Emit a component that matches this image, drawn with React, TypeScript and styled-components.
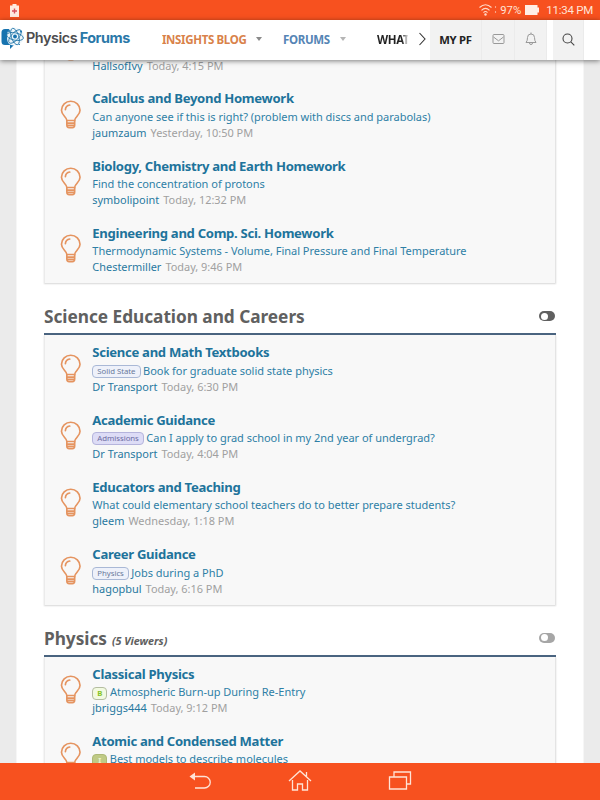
import React from "react";
import styled, { createGlobalStyle } from "styled-components";

const Global = createGlobalStyle`
  * { box-sizing: border-box; }
  body { margin: 0; background: #ebebeb; font-family: "Noto Sans", sans-serif; }
`;

const Screen = styled.div`
  width: 600px;
  height: 800px;
  display: flex;
  flex-direction: column;
  overflow: hidden;
  background: #ebebeb;
`;

const StatusBar = styled.div`
  height: 19.5px;
  flex: none;
  display: flex;
  align-items: center;
  justify-content: space-between;
  padding: 0 7px 0 10px;
  background: #f7511f;
  color: #ffe3d6;
  font: 11.5px Roboto, sans-serif;
  svg { display: block; }
`;

const StatusGroup = styled.div`
  display: flex;
  align-items: center;
`;

const Percent = styled.span`
  margin: 1px 4px 0 3px;
  font-size: 11.3px;
`;

const Clock = styled.span`
  margin: 1px 0 0 7px;
  font-size: 11.5px;
  letter-spacing: -0.25px;
`;

const Header = styled.header`
  position: relative;
  z-index: 2;
  height: 40.5px;
  flex: none;
  display: flex;
  background: #fff;
  box-shadow: 0 1px 5px rgba(0, 0, 0, 0.5);
`;

const Brand = styled.div`
  width: 162px;
  flex: none;
  display: flex;
  align-items: center;
  padding: 0 0 4px 1px;
  font: 600 14.4px Inter, sans-serif;
  letter-spacing: -0.45px;
  color: #4d4d4f;
  white-space: nowrap;
  svg { margin-right: 2px; flex: none; }
  b { color: #2a78a8; font-weight: 700; margin-left: 2.5px; }
`;

const NavItem = styled.div<{ $color: string; $width: number; $caret?: string }>`
  width: ${(p) => p.$width}px;
  flex: none;
  display: flex;
  align-items: center;
  padding-bottom: 1px;
  font-size: 11.5px;
  letter-spacing: -0.35px;
  font-weight: 700;
  color: ${(p) => p.$color};
  white-space: nowrap;
  overflow: hidden;
  &::after {
    content: "";
    display: ${(p) => (p.$caret ? "block" : "none")};
    margin-left: 10px;
    border: 3.5px solid transparent;
    border-top: 4px solid ${(p) => p.$caret};
    border-bottom: 0;
  }
`;

const Fade = styled.span`
  background: linear-gradient(90deg, #222 78%, #ddd 96%);
  background-clip: text;
  color: transparent;
`;

const NavCell = styled.div<{ $width: number; $gap?: number }>`
  width: ${(p) => p.$width}px;
  margin-left: ${(p) => p.$gap ?? 0}px;
  flex: none;
  display: flex;
  align-items: center;
  justify-content: center;
  padding-bottom: 1px;
  background: #f2f2f2;
  border-right: 1px solid #ebebeb;
  font-size: 11.3px;
  letter-spacing: -0.25px;
  font-weight: 700;
  color: #222;
`;

const Chevron = styled.div`
  width: 15px;
  flex: none;
  display: flex;
  align-items: center;
  svg { margin: 0 0 2px 3px; flex: none; }
`;

const Viewport = styled.main`
  flex: 1;
  min-height: 0;
  overflow: hidden;
  display: flex;
  justify-content: center;
`;

const Page = styled.div`
  width: 568px;
  flex: none;
  align-self: flex-start;
  padding: 0 27px;
  margin-top: -46px;
  background: #fff;
  border-left: 1px solid #f6f6f6;
  border-right: 1px solid #f6f6f6;
`;

const SectionHead = styled.div`
  height: 52.2px;
  display: flex;
  align-items: flex-end;
  justify-content: space-between;
  padding: 0 1px 4px 0;
  border-bottom: 2.5px solid #4a6480;
`;

const Heading = styled.h2`
  margin: 0;
  height: 24px;
  font-size: 17.25px;
  line-height: 24px;
  letter-spacing: -0.03px;
  font-weight: 700;
  color: #606060;
  white-space: nowrap;
  small { font-size: 10.8px; line-height: 1; font-style: italic; margin-left: 0.5px; }
`;

const Toggle = styled.span<{ $color: string }>`
  width: 16px;
  height: 10px;
  margin-bottom: 8px;
  display: flex;
  align-items: center;
  padding-left: 1.5px;
  border-radius: 5px;
  background: ${(p) => p.$color};
  &::after {
    content: "";
    width: 7px;
    height: 7px;
    border-radius: 50%;
    background: #fff;
  }
`;

const List = styled.div`
  background: #f8f8f8;
  border-left: 1px solid #ebebeb;
  border-right: 1px solid #e4e4e4;
  box-shadow: 0 1px 1.5px rgba(0, 0, 0, 0.16);
`;

const Row = styled.article`
  height: 67.3px;
  display: grid;
  grid-template-columns: 47.3px 1fr;
  padding-top: 7px;
  white-space: nowrap;
`;

const BulbSlot = styled.div`
  padding: 11.3px 0 0 15px;
  svg { display: block; }
`;

const Title = styled.h3`
  margin: 0;
  height: 20px;
  font-size: 13.1px;
  letter-spacing: -0.3px;
  line-height: 20px;
  font-weight: 700;
  color: #20739b;
`;

const Topic = styled.div`
  height: 16.5px;
  display: flex;
  align-items: center;
  font-size: 11px;
  letter-spacing: -0.02px;
  line-height: 16px;
  color: #2e7fa6;
`;

const Meta = styled.div`
  font-size: 10.95px;
  line-height: 16px;
  color: #a0a0a0;
  span { color: #2878a0; margin-right: 4px; }
`;

const tones = {
  blue: ["#eef1fa", "#a9b8d6", "#69799a"],
  violet: ["#dddcf6", "#b5b4dc", "#6b6ba2"],
  green: ["#f2fae0", "#b4bda0", "#86c428"],
  olive: ["#bfca85", "#adb976", "#eef3cd"],
};
type Tone = keyof typeof tones;

const Tag = styled.span<{ $tone: Tone }>`
  height: 13px;
  min-width: 15px;
  margin: 2px 2.5px 0 0;
  padding: 0 4px;
  border-radius: 4px;
  font-size: 7.8px;
  letter-spacing: -0.03px;
  line-height: 11.5px;
  text-align: center;
  font-weight: ${(p) => (p.$tone === "green" || p.$tone === "olive" ? 700 : 400)};
  background: ${(p) => tones[p.$tone][0]};
  border: 1px solid ${(p) => tones[p.$tone][1]};
  color: ${(p) => tones[p.$tone][2]};
`;

const SystemNav = styled.nav`
  position: relative;
  z-index: 2;
  height: 37.5px;
  flex: none;
  display: flex;
  align-items: center;
  justify-content: center;
  gap: 76px;
  background: #f7511f;
`;

const Bulb = () => (
  <svg width="21.500" height="29.500" viewBox="0 0 22 31" preserveAspectRatio="none" fill="none" stroke="#e59460" strokeWidth="1.700" strokeLinecap="round">
    <path d="M7 21.500C6.800 17.500 1.500 16.200 1.500 10.800a9.500 9.500 0 0 1 19 0c0 5.400-5.300 6.700-5.500 10.700z" />
    <path d="M5.500 10.200c.2-2.700 2-4.500 4.500-4.900M7.200 24.300h7.600M7.800 26.700h6.400M7 21.500v4.700q0 2.800 2.400 2.800h3.200q2.400 0 2.400-2.800v-4.700" />
  </svg>
);

const Logo = () => (
  <svg width="23" height="24" viewBox="0 0 23 24" fill="none">
    <path d="M4 3h15v16h-6l-4 4v-4H4q-3.500 0-3.500-3.500v-9Q.5 3 4 3z" fill="#1773af" />
    <path d="M13 1.500c4 0 10 3 10 8.500s-4 9.500-10 9.500-7-4-7-9 2-9 7-9z" fill="#eff6fa" />
    <g stroke="#2879aa" strokeWidth="0.900">
      <ellipse cx="14" cy="10.500" rx="8.500" ry="3.700" transform="rotate(12 14 10.500)" />
      <ellipse cx="14" cy="10.500" rx="8.500" ry="3.700" transform="rotate(72 14 10.500)" />
      <ellipse cx="14" cy="10.500" rx="8.500" ry="3.700" transform="rotate(132 14 10.500)" />
    </g>
    <circle cx="14" cy="10.500" r="1.900" fill="#1773af" />
    <circle cx="8" cy="5" r="1.100" fill="#1773af" />
    <circle cx="20" cy="5.500" r="1" fill="#1773af" />
  </svg>
);

type Entry = { title?: string; topic?: string; user: string; time: string; tag?: string; tone?: Tone };

const homework: Entry[] = [
  { user: "HallsofIvy", time: "Today, 4:15 PM" },
  { title: "Calculus and Beyond Homework", topic: "Can anyone see if this is right? (problem with discs and parabolas)", user: "jaumzaum", time: "Yesterday, 10:50 PM" },
  { title: "Biology, Chemistry and Earth Homework", topic: "Find the concentration of protons", user: "symbolipoint", time: "Today, 12:32 PM" },
  { title: "Engineering and Comp. Sci. Homework", topic: "Thermodynamic Systems - Volume, Final Pressure and Final Temperature", user: "Chestermiller", time: "Today, 9:46 PM" },
];
const careers: Entry[] = [
  { title: "Science and Math Textbooks", topic: "Book for graduate solid state physics", user: "Dr Transport", time: "Today, 6:30 PM", tag: "Solid State", tone: "blue" },
  { title: "Academic Guidance", topic: "Can I apply to grad school in my 2nd year of undergrad?", user: "Dr Transport", time: "Today, 4:04 PM", tag: "Admissions", tone: "violet" },
  { title: "Educators and Teaching", topic: "What could elementary school teachers do to better prepare students?", user: "gleem", time: "Wednesday, 1:18 PM" },
  { title: "Career Guidance", topic: "Jobs during a PhD", user: "hagopbul", time: "Today, 6:16 PM", tag: "Physics", tone: "blue" },
];
const physics: Entry[] = [
  { title: "Classical Physics", topic: "Atmospheric Burn-up During Re-Entry", user: "jbriggs444", time: "Today, 9:12 PM", tag: "B", tone: "green" },
  { title: "Atomic and Condensed Matter", topic: "Best models to describe molecules", user: "", time: "", tag: "I", tone: "olive" },
];

const ForumList = ({ entries }: { entries: Entry[] }) => (
  <List>
    {entries.map((e) => (
      <Row key={e.title ?? e.user}>
        <BulbSlot><Bulb /></BulbSlot>
        <div>
          <Title>{e.title}</Title>
          <Topic>{e.tag && <Tag $tone={e.tone!}>{e.tag}</Tag>}{e.topic}</Topic>
          <Meta><span>{e.user}</span>{e.time}</Meta>
        </div>
      </Row>
    ))}
  </List>
);

export default function App() {
  return (
    <Screen>
      <Global />
      <StatusBar>
        <svg width="9" height="14" viewBox="0 0 9 14">
          <path d="M2.500 1h4v1.500H9V14H0V2.500h2.500z" fill="#ffe9df" />
          <path d="M4.500 5.500v5M2 8h5" stroke="#d8505c" strokeWidth="1.400" />
        </svg>
        <StatusGroup>
          <svg width="18" height="13" viewBox="0 0 18 13" fill="none" stroke="#ffd9c8" strokeWidth="1.100">
            <path d="M.5 4.500Q6.500-1 12.500 4.500M2.500 7.300Q6.500 3.300 10.500 7.300M4.500 9.600Q6.500 7.500 8.500 9.600" />
            <circle cx="6.500" cy="11.500" r="1.200" fill="#ffd9c8" stroke="none" />
            <path d="M16.500 3v2M16.500 8v2" stroke="#f9a488" />
          </svg>
          <Percent>97%</Percent>
          <svg width="14" height="10" viewBox="0 0 14 10"><path d="M0 0h12.500v2.500H14v5h-1.500V10H0z" fill="#ffeee6" /></svg>
          <Clock>11:34 PM</Clock>
        </StatusGroup>
      </StatusBar>
      <Header>
        <Brand><Logo />Physics<b>Forums</b></Brand>
        <NavItem $color="#d9824a" $width={121} $caret="#8a8a8a">INSIGHTS BLOG</NavItem>
        <NavItem $color="#5585b5" $width={94} $caret="#b5b5b5">FORUMS</NavItem>
        <NavItem $color="#222" $width={31}><Fade>WHAT</Fade></NavItem>
        <Chevron>
          <svg width="15" height="14" viewBox="0 0 15 14" fill="none" stroke="#333" strokeWidth="1.100"><path d="M8.500 1l5.500 6-5.500 6" /></svg>
        </Chevron>
        <NavCell $width={52} $gap={7}>MY PF</NavCell>
        <NavCell $width={33}>
          <svg width="13" height="10" viewBox="0 0 13 10" fill="none" stroke="#999"><rect x="1" y=".5" width="11" height="9" rx="1" /><path d="M1.500 3L6.500 6.800 11.500 3" /></svg>
        </NavCell>
        <NavCell $width={32}>
          <svg width="12" height="14" viewBox="0 0 12 14" fill="none" stroke="#999"><path d="M1 10.500Q2.500 9 2.500 5.500a3.500 3.500 0 0 1 7 0Q9.500 9 11 10.500zM4.500 11a1.500 1.500 0 0 0 3 0M6 .5v1.500" /></svg>
        </NavCell>
        <NavCell $width={31} $gap={6}>
          <svg width="13" height="13" viewBox="0 0 13 13" fill="none" stroke="#444" strokeWidth="1.100"><circle cx="5.500" cy="5.500" r="4.500" /><path d="M8.800 8.800l3.500 3.500" /></svg>
        </NavCell>
      </Header>
      <Viewport>
        <Page>
          <ForumList entries={homework} />
          <SectionHead><Heading>Science Education and Careers</Heading><Toggle $color="#606060" /></SectionHead>
          <ForumList entries={careers} />
          <SectionHead><Heading>Physics <small>(5 Viewers)</small></Heading><Toggle $color="#a6a6a6" /></SectionHead>
          <ForumList entries={physics} />
        </Page>
      </Viewport>
      <SystemNav>
        <svg width="24" height="24" viewBox="0 0 24 24" fill="none" stroke="#ffe3d6" strokeWidth="1.300"><path d="M5 7.500h11.500a5.500 5.500 0 0 1 0 11.500H7" /><path d="M1.500 7.500l5.500-4v8z" fill="#ffe3d6" stroke="none" /></svg>
        <svg width="24" height="24" viewBox="0 0 24 24" fill="none" stroke="#ffe3d6" strokeWidth="1.300"><path d="M1 12L12 2l11 10M4.500 11v10h5v-6h5v6h5V11M18.500 7.500V3" /></svg>
        <svg width="24" height="24" viewBox="0 0 24 24" fill="none" stroke="#ffe3d6" strokeWidth="1.300"><path d="M1.500 8h17v12h-17zM6 8V3h16.500v12h-4" /></svg>
      </SystemNav>
    </Screen>
  );
}
